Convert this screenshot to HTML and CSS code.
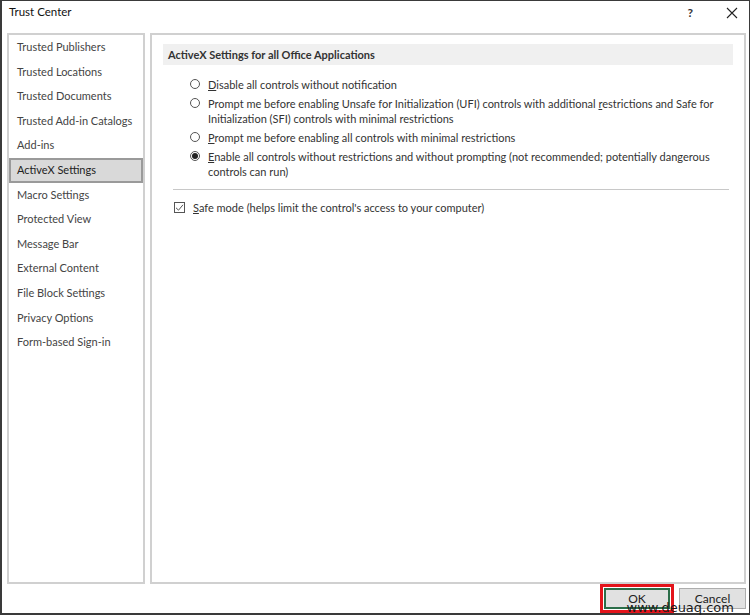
FILE: index.html
```html
<!DOCTYPE html>
<html>
<head>
<meta charset="utf-8">
<link rel="stylesheet" href="styles.css">
</head>
<body>
<div class="window">
  <div class="titlebar">
    <span class="title">Trust Center</span>
    <span class="help">?</span>
    <span class="close">
      <svg width="12" height="12" viewBox="0 0 12 12"><path d="M1 1 L11 11 M11 1 L1 11" stroke="#222" stroke-width="1.1" fill="none"/></svg>
    </span>
  </div>
  <div class="main">
    <div class="nav">
      <div class="nav-item">Trusted Publishers</div>
      <div class="nav-item">Trusted Locations</div>
      <div class="nav-item">Trusted Documents</div>
      <div class="nav-item">Trusted Add-in Catalogs</div>
      <div class="nav-item">Add-ins</div>
      <div class="nav-item selected">ActiveX Settings</div>
      <div class="nav-item">Macro Settings</div>
      <div class="nav-item">Protected View</div>
      <div class="nav-item">Message Bar</div>
      <div class="nav-item">External Content</div>
      <div class="nav-item">File Block Settings</div>
      <div class="nav-item">Privacy Options</div>
      <div class="nav-item">Form-based Sign-in</div>
    </div>
    <div class="content">
      <div class="section-head">ActiveX Settings for all Office Applications</div>
      <div class="options">
        <div class="opt"><span class="radio"></span><span class="opt-text"><u>D</u>isable all controls without notification</span></div>
        <div class="opt"><span class="radio"></span><span class="opt-text">Prompt me before enabling Unsafe for Initialization (UFI) controls with additional <u>r</u>estrictions and Safe for<br>Initialization (SFI) controls with minimal restrictions</span></div>
        <div class="opt"><span class="radio"></span><span class="opt-text"><u>P</u>rompt me before enabling all controls with minimal restrictions</span></div>
        <div class="opt"><span class="radio checked"></span><span class="opt-text"><u>E</u>nable all controls without restrictions and without prompting (not recommended; potentially dangerous<br>controls can run)</span></div>
      </div>
      <div class="sep"></div>
      <div class="check-row">
        <span class="checkbox">
          <svg width="9" height="9" viewBox="0 0 9 9"><path d="M1 4.8 L3.5 7.2 L8 1.8" stroke="#555" stroke-width="1" fill="none"/></svg>
        </span>
        <span class="opt-text"><u>S</u>afe mode (helps limit the control's access to your computer)</span>
      </div>
    </div>
  </div>
  <div class="footer">
    <div class="ok-wrap"><button class="btn ok">OK</button></div>
    <button class="btn">Cancel</button>
    <span class="watermark">www.deuaq.com</span>
  </div>
</div>
</body>
</html>
```
FILE: styles.css
```css
html, body {
  margin: 0;
  padding: 0;
  background: #fff;
}
body {
  font-family: Lato, "Noto Sans", sans-serif;
  font-size: 11px;
  color: #222;
}
.window {
  position: relative;
  width: 750px;
  height: 615px;
  box-sizing: border-box;
  border: 1px solid #3a3a3a;
  border-left-width: 2px;
  border-bottom-width: 2px;
  background: #fff;
  display: flex;
  flex-direction: column;
}
.titlebar {
  height: 32px;
  display: flex;
  align-items: flex-start;
  padding-top: 4px;
  box-sizing: border-box;
}
.title {
  margin-left: 7px;
  color: #111;
  font-size: 11.5px;
}
.help {
  margin-left: auto;
  margin-right: 33px;
  font-weight: bold;
  font-size: 12px;
  color: #333;
}
.close {
  margin-right: 11px;
  margin-top: 2px;
}
.main {
  flex: 1;
  display: flex;
  gap: 5px;
  padding: 0 3px 0 5px;
  min-height: 0;
}
.nav {
  width: 138px;
  box-sizing: border-box;
  border: 2px solid #d0d0d0;
}
.nav-item {
  height: 24.6px;
  line-height: 24px;
  padding-left: 8px;
  color: #444;
  white-space: nowrap;
  box-sizing: border-box;
}
.nav-item.selected {
  background: #d9d9d9;
  border: 2px solid #9a9a9a;
  padding-left: 6px;
  line-height: 20px;
  color: #222;
}
.content {
  flex: 1;
  box-sizing: border-box;
  border: 2px solid #d0d0d0;
  padding: 9px 11px 0 11px;
}
.section-head {
  background: #f0f0f0;
  height: 21px;
  line-height: 21px;
  padding-left: 5px;
  font-weight: bold;
  color: #333;
}
.options {
  padding: 12px 0 0 27px;
  display: flex;
  flex-direction: column;
  gap: 4px;
}
.opt {
  display: flex;
  align-items: flex-start;
}
.opt-text {
  line-height: 15px;
  color: #333;
  white-space: nowrap;
}
.radio {
  width: 10px;
  height: 10px;
  border: 1px solid #555;
  border-radius: 50%;
  box-sizing: border-box;
  margin-top: 2px;
  margin-right: 8px;
  flex: none;
  display: flex;
  align-items: center;
  justify-content: center;
}
.radio.checked::after {
  content: "";
  width: 6px;
  height: 6px;
  border-radius: 50%;
  background: #222;
}
.sep {
  height: 1px;
  background: #c8c8c8;
  margin: 10px 4px 0 10px;
}
.check-row {
  display: flex;
  align-items: center;
  padding: 10px 0 0 11px;
}
.checkbox {
  width: 11px;
  height: 11px;
  border: 1px solid #555;
  box-sizing: border-box;
  margin-right: 8px;
  display: flex;
  align-items: center;
  justify-content: center;
}
.footer {
  height: 29px;
  display: flex;
  align-items: center;
  justify-content: flex-end;
  gap: 5px;
  padding-right: 3px;
}
.ok-wrap {
  border: 3px solid #e3141b;
  padding: 1px;
}
.btn {
  font-family: Lato, "Noto Sans", sans-serif;
  font-size: 12px;
  color: #222;
  background: #e1e1e1;
  border: 1px solid #adadad;
  height: 21px;
  width: 67px;
  padding: 0;
  margin: 0;
}
.btn.ok {
  width: 66px;
  border: 2px solid #2c6e49;
}
.watermark {
  position: absolute;
  right: 15px;
  bottom: -2px;
  font-family: "DejaVu Sans", sans-serif;
  font-size: 13px;
  color: #1a1a1a;
}
```
